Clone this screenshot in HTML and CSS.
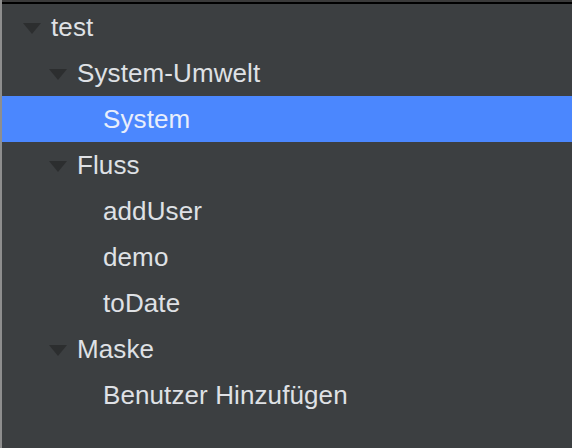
FILE: index.html
```html
<!DOCTYPE html>
<html>
<head>
<meta charset="utf-8">
<link rel="stylesheet" href="styles.css">
</head>
<body>
<div class="panel">
  <div class="topbar"></div>
  <ul class="tree">
    <li class="row l0"><span class="arrow"></span><span class="label">test</span></li>
    <li class="row l1"><span class="arrow"></span><span class="label">System-Umwelt</span></li>
    <li class="row l2 selected"><span class="arrow none"></span><span class="label">System</span></li>
    <li class="row l1"><span class="arrow"></span><span class="label">Fluss</span></li>
    <li class="row l2"><span class="arrow none"></span><span class="label">addUser</span></li>
    <li class="row l2"><span class="arrow none"></span><span class="label">demo</span></li>
    <li class="row l2"><span class="arrow none"></span><span class="label">toDate</span></li>
    <li class="row l1"><span class="arrow"></span><span class="label">Maske</span></li>
    <li class="row l2"><span class="arrow none"></span><span class="label">Benutzer Hinzufügen</span></li>
  </ul>
</div>
</body>
</html>
```
FILE: styles.css
```css
html, body {
  margin: 0;
  padding: 0;
  background: #3c3f41;
  width: 572px;
  height: 448px;
  overflow: hidden;
}
.panel {
  height: 448px;
  border-left: 2px solid #8e8e8e;
  box-sizing: border-box;
  background: #3c3f41;
}
.topbar {
  height: 2px;
  background: #3a3a3a;
  border-bottom: 2px solid #000;
}
.tree {
  list-style: none;
  margin: 0;
  padding: 0;
}
.row {
  height: 46px;
  display: flex;
  align-items: center;
  font-family: "Liberation Sans", Arial, sans-serif;
  font-size: 26px;
  letter-spacing: 0.1px;
  color: #dfe1e5;
  box-sizing: border-box;
}
.row.l0 { padding-left: 21px; }
.row.l1 { padding-left: 47px; }
.row.l2 { padding-left: 73px; }
.row.selected {
  background: #4b87fe;
  color: #e8eefb;
}
.arrow {
  width: 28px;
  height: 46px;
  display: flex;
  align-items: center;
  flex: none;
}
.arrow::before {
  content: "";
  display: block;
  width: 0;
  height: 0;
  margin-top: 2px;
  border-left: 9px solid transparent;
  border-right: 9px solid transparent;
  border-top: 11px solid #2c2e2f;
}
.arrow.none::before {
  display: none;
}
.label {
  white-space: nowrap;
  line-height: 46px;
}
```
